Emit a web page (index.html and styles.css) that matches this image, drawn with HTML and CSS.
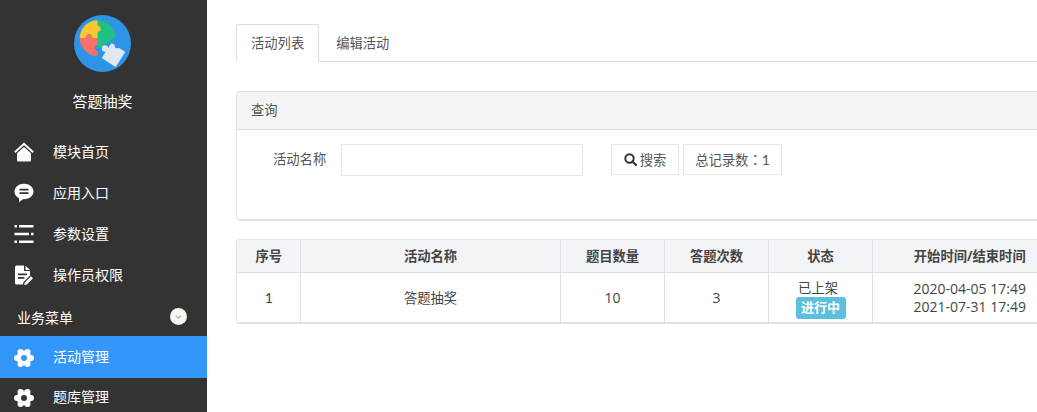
FILE: index.html
```html
<!DOCTYPE html>
<html lang="zh-CN">
<head>
<meta charset="utf-8">
<title>答题抽奖</title>
<link rel="stylesheet" href="styles.css">
</head>
<body>
<svg width="0" height="0" class="defs">
  <defs>
    <path id="gear" d="M10 2.500a7.500 7.500 0 1 1 0 15a7.500 7.500 0 1 1 0-15zM14 10a3 3 0 1 1 6 0a3 3 0 1 1-6 0zM10.500 16.060a3 3 0 1 1 6 0a3 3 0 1 1-6 0zM3.500 16.060a3 3 0 1 1 6 0a3 3 0 1 1-6 0zM0 10a3 3 0 1 1 6 0a3 3 0 1 1-6 0zM3.500 3.940a3 3 0 1 1 6 0a3 3 0 1 1-6 0zM10.500 3.940a3 3 0 1 1 6 0a3 3 0 1 1-6 0zM10 7a3 3 0 1 0 0 6a3 3 0 1 0 0-6z"/>
  </defs>
</svg>
<div class="app">
  <aside class="sidebar">
    <div class="brand">
      <svg class="logo" viewBox="0 0 57 57" width="57" height="57">
        <circle cx="28.500" cy="28.500" r="28.500" fill="#2d94e6"/>
        <path d="M23.700 5.300A18 18 0 0 1 41.500 22L27 33H23.700z" fill="#1fbf86"/>
        <path d="M23.700 5.300A18 18 0 0 0 5.700 23.300h6.100a3.300 3.300 0 1 1 6.400 0h5.500v-6.500a3 3 0 1 0 0-6z" fill="#fdc62f"/>
        <path d="M5.700 23.300h6.100a3.300 3.300 0 1 1 6.400 0h5.500v6.700a3 3 0 0 0 0 6v5A18 18 0 0 1 5.700 23.300z" fill="#f96f6a"/>
        <g fill="#e1e7f0">
          <rect x="31.200" y="31" width="16.600" height="18" rx="1" transform="rotate(33 39.500 40)"/>
          <circle cx="31" cy="33.500" r="3.200"/>
        </g>
        <circle cx="43" cy="31" r="2.300" fill="#2d94e6"/>
      </svg>
      <div class="brand-name">答题抽奖</div>
    </div>
    <nav class="menu">
      <a class="item">
        <svg class="icon" viewBox="0 0 20 20"><path d="M10 .5 19.800 9.500l-1.300 1.400L10 3.200 1.500 10.900.2 9.500zM10 5l7 6.300V18a1.500 1.500 0 0 1-1.500 1.500h-11A1.500 1.500 0 0 1 3 18v-6.700z"/></svg>
        <span>模块首页</span>
      </a>
      <a class="item">
        <svg class="icon" viewBox="0 0 20 20"><path fill-rule="evenodd" d="M10 .8c5.300 0 9.500 3.400 9.500 7.700s-4.200 7.700-9.500 7.700h-1.200L5 19.300v-4.100C2.200 13.900.5 11.400.5 8.500.5 4.200 4.700.8 10 .8zM5.500 5.800v1.700h9V5.800zM5.500 9.300V11h9V9.300z"/></svg>
        <span>应用入口</span>
      </a>
      <a class="item">
        <svg class="icon" viewBox="0 0 20 20"><path d="M.5 1h2.500v2.600H.5zM5 1h14.500v2.600H5zM.5 8.700h14.500v2.600H.5zM17 8.700h2.500v2.600H17zM.5 16.400H3V19H.5zM5 16.400h14.500V19H5z"/></svg>
        <span>参数设置</span>
      </a>
      <a class="item">
        <svg class="icon" viewBox="0 0 20 20"><path fill-rule="evenodd" d="M2.500.5h7.500v5.500h6v4.500l-6.500 6.500-.7 2.500H2.500A1.500 1.500 0 0 1 1 18V2A1.500 1.500 0 0 1 2.500.5zM4 8.500v1.700h9V8.500zM4 12v1.700h6.500V12z"/><path d="M11.500.7 16 5h-4.500zM17 11.300l2 2-6.300 6.200-2.500.5.500-2.500z"/></svg>
        <span>操作员权限</span>
      </a>
      <div class="group">
        <span>业务菜单</span>
        <svg class="chevron" viewBox="0 0 16 16"><circle cx="8" cy="8" r="8" fill="#f7f5f0"/><path d="M5.500 7.200 8 9.500l2.500-2.300" fill="none" stroke="#a9b0bb" stroke-width="1.100"/></svg>
      </div>
      <a class="item active">
        <svg class="icon" viewBox="0 0 20 20"><use href="#gear"/></svg>
        <span>活动管理</span>
      </a>
      <a class="item tail">
        <svg class="icon" viewBox="0 0 20 20"><use href="#gear"/></svg>
        <span>题库管理</span>
      </a>
    </nav>
  </aside>
  <main class="main">
    <div class="tabs">
      <a class="tab current">活动列表</a>
      <a class="tab">编辑活动</a>
    </div>
    <section class="panel">
      <div class="panel-head">查询</div>
      <div class="panel-body">
        <label class="field-label">活动名称</label>
        <input class="field-input" type="text">
        <button class="btn search" type="button">
          <svg class="search-icon" viewBox="0 0 13 13"><circle cx="5.500" cy="5.500" r="4.200" fill="none" stroke="#333" stroke-width="2"/><path d="M8.500 8.500 12 12" stroke="#333" stroke-width="2.200" stroke-linecap="round"/></svg>
          搜索
        </button>
        <span class="btn total">总记录数<span class="colon">：</span><span class="lone">1</span></span>
      </div>
    </section>
    <div class="table-card">
      <table class="table">
        <colgroup>
          <col class="c1"><col class="c2"><col class="c3"><col class="c3"><col class="c3"><col class="c6">
        </colgroup>
        <thead>
          <tr><th>序号</th><th>活动名称</th><th>题目数量</th><th>答题次数</th><th>状态</th><th>开始时间/结束时间</th></tr>
        </thead>
        <tbody>
          <tr>
            <td><span class="lone">1</span></td>
            <td>答题抽奖</td>
            <td class="num">10</td>
            <td class="num">3</td>
            <td class="state"><div class="status">已上架</div><span class="badge">进行中</span></td>
            <td class="time">2020-04-05 17:49<br>2021-07-31 17:49</td>
          </tr>
        </tbody>
      </table>
    </div>
  </main>
</div>
</body>
</html>
```
FILE: styles.css
```css
* { box-sizing: border-box; }
html, body { margin: 0; height: 100%; overflow: hidden; }
body {
  font-family: "Open Sans", "Noto Sans CJK SC", sans-serif;
  font-size: 14px;
  color: #333;
  background: #fff;
}
.defs { position: absolute; }
.app { display: flex; width: 1037px; height: 412px; overflow: hidden; }

.sidebar { flex: 0 0 207px; background: #333; color: #fff; overflow: hidden; }
.brand { display: flex; flex-direction: column; align-items: center; padding: 15px 2px 0 0; }
.logo { display: block; }
.brand-name { margin-top: 18px; font-size: 15px; line-height: 22px; height: 41px; }
.menu { display: flex; flex-direction: column; }
.item { display: flex; align-items: center; gap: 19px; height: 41px; padding: 0 0 2px 14px; flex: none; }
.icon { width: 20px; height: 20px; fill: #fff; flex: none; margin-top: 3px; }
.group { display: flex; align-items: center; justify-content: space-between; height: 41px; padding: 2px 20px 0 17px; flex: none; }
.chevron { width: 17px; height: 17px; }
.active { background: #3296fa; height: 42px; }
.tail { height: 36px; padding-bottom: 0; }

.main { flex: 1 1 auto; min-width: 0; padding: 24px 0 0 29px; overflow: hidden; }
.tabs { display: flex; height: 38px; border-bottom: 1px solid #ddd; width: 830px; }
.tab { display: block; height: 38px; line-height: 37px; padding: 0 14px; margin-right: 2px; color: #555; font-size: 13.300px; border: 1px solid transparent; }
.current { border-color: #ddd; border-bottom-color: #fff; border-radius: 3px 3px 0 0; background: #fff; }

.panel { margin-top: 29px; width: 830px; height: 130px; border: 1px solid #e3e3e3; border-bottom-width: 2px; border-radius: 4px; }
.panel-head { height: 38px; line-height: 36px; padding-left: 14px; background: #f4f4f4; border-bottom: 1px solid #ddd; font-size: 13.300px; color: #555; }
.panel-body { display: flex; align-items: flex-start; padding: 14px 0 0 36px; }
.field-label { width: 54px; line-height: 31px; font-size: 13.300px; color: #555; flex: none; }
.field-input { width: 242px; height: 32px; margin: 0 28px 0 14px; border: 1px solid #e6e6e6; background: #fff; flex: none; }
.btn { display: flex; align-items: center; justify-content: center; height: 31px; margin-right: 4px; border: 1px solid #e6e6e6; background: #fff; color: #555; font: inherit; font-size: 13.300px; padding: 0; flex: none; }
.search { width: 68px; gap: 3px; }
.search-icon { width: 13px; height: 13px; }
.total { width: 99px; }
.colon { font-family: "Noto Sans CJK TC", sans-serif; }
.lone { font-family: "Lato", sans-serif; font-size: 14px; }

.table-card { margin-top: 18px; width: 832px; height: 85px; border: 1px solid #e6e6e6; border-bottom: 2px solid #e2e2e2; border-radius: 4px; overflow: hidden; }
.table { width: 832px; border-collapse: collapse; table-layout: fixed; }
.c1 { width: 63px; }
.c2 { width: 260px; }
.c3 { width: 104px; }
.c6 { width: 197px; }
th { height: 32px; padding: 0 0 0 1px; background: #f3f4f8; border-right: 1px solid #dcdfe6; border-bottom: 1px solid #dcdfe6; font-size: 13.300px; font-weight: 700; color: #444; text-align: center; }
td { height: 51px; padding: 0 0 0 1px; border-right: 1px solid #dcdfe6; text-align: center; font-size: 13.300px; color: #444; line-height: 18px; }
th:last-child, td:last-child { border-right: 0; padding: 0 2px 0 0; }
.num { font-size: 14px; }
.state { padding-top: 2px; }
.time { font-size: 14px; }
.status { line-height: 18px; padding-right: 5px; }
.badge { display: block; width: 50px; height: 22px; margin: 0 auto; line-height: 21px; border-radius: 3px; background: #5bc0de; color: #fff; font-size: 13px; font-weight: 700; }
```
